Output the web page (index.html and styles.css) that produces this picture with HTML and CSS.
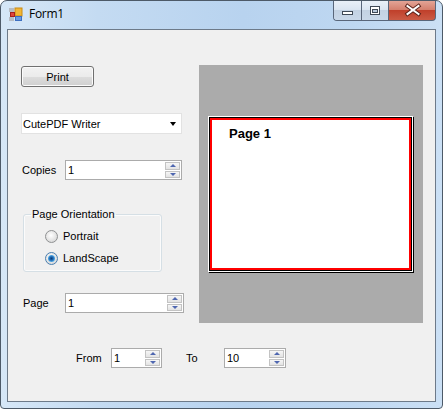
FILE: index.html
```html
<!DOCTYPE html>
<html>
<head>
<meta charset="utf-8">
<title>Form1</title>
<link rel="stylesheet" href="styles.css">
</head>
<body>
<div class="window">
  <div class="titlebar">
    <svg class="app-icon" width="16" height="16" viewBox="0 0 16 16">
      <rect x="1" y="2" width="5" height="4" fill="#b7bcc3"/>
      <rect x="1" y="11" width="5" height="4" fill="#b7bcc3"/>
      <rect x="7" y="2" width="7" height="8" fill="#f2b636" stroke="#c98a10" stroke-width="1"/>
      <rect x="7.5" y="10.5" width="6" height="4" fill="#6b9be0" stroke="#3d6fc0" stroke-width="1"/>
      <rect x="2.5" y="6.5" width="4" height="4" fill="#e0443a" stroke="#a8211b" stroke-width="1"/>
    </svg>
    <span class="title">Form1</span>
    <div class="caption">
      <div class="cap-group">
        <div class="cap-btn cap-min">
          <svg width="27" height="19" viewBox="0 0 27 19"><rect x="8.5" y="10.5" width="10" height="3" fill="#fff" stroke="#3f4956"/></svg>
        </div>
        <div class="cap-btn cap-max">
          <svg width="26" height="19" viewBox="0 0 26 19"><rect x="8.5" y="5.5" width="9" height="8" fill="#fff" stroke="#3f4956"/><rect x="10.5" y="8.5" width="5" height="3" fill="#b9c9db" stroke="#3f4956"/></svg>
        </div>
      </div>
      <div class="cap-btn cap-close">
        <svg width="46" height="19" viewBox="0 0 46 19"><path d="M18.5 5 L29.5 13 M29.5 5 L18.5 13" stroke="#5a2219" stroke-width="4" stroke-linecap="square" fill="none"/><path d="M18.5 5 L29.5 13 M29.5 5 L18.5 13" stroke="#fff" stroke-width="2" stroke-linecap="square" fill="none"/></svg>
      </div>
    </div>
  </div>
  <div class="client">
    <div class="top-row">
      <div class="left-col">
        <button class="btn">Print</button>
        <div class="combo"><span>CutePDF Writer</span><span class="combo-arrow"></span></div>
        <div class="field-row copies">
          <span class="lbl">Copies</span>
          <div class="numeric num-copies">
            <span class="num-value">1</span>
            <div class="spin"><div class="spin-btn"><span class="arrow-up"></span></div><div class="spin-btn"><span class="arrow-down"></span></div></div>
          </div>
        </div>
        <fieldset class="group">
          <legend>Page Orientation</legend>
          <div class="radio-row"><span class="radio"></span>Portrait</div>
          <div class="radio-row"><span class="radio checked"></span>LandScape</div>
        </fieldset>
        <div class="field-row page-row">
          <span class="lbl">Page</span>
          <div class="numeric num-page">
            <span class="num-value">1</span>
            <div class="spin"><div class="spin-btn"><span class="arrow-up"></span></div><div class="spin-btn"><span class="arrow-down"></span></div></div>
          </div>
        </div>
      </div>
      <div class="preview">
        <div class="page">
          <div class="page-frame">
            <div class="page-sheet">Page 1</div>
          </div>
        </div>
      </div>
    </div>
    <div class="bottom-row">
      <span class="lbl lbl-from">From</span>
      <div class="numeric num-from">
        <span class="num-value">1</span>
        <div class="spin"><div class="spin-btn"><span class="arrow-up"></span></div><div class="spin-btn"><span class="arrow-down"></span></div></div>
      </div>
      <span class="lbl lbl-to">To</span>
      <div class="numeric num-to">
        <span class="num-value">10</span>
        <div class="spin"><div class="spin-btn"><span class="arrow-up"></span></div><div class="spin-btn"><span class="arrow-down"></span></div></div>
      </div>
    </div>
  </div>
</div>
</body>
</html>
```

FILE: styles.css
```css
* { box-sizing: border-box; }
html, body { margin: 0; padding: 0; }
body {
  width: 443px;
  height: 409px;
  overflow: hidden;
  background: #fff;
  font-family: "Liberation Sans", Arial, sans-serif;
  font-size: 11px;
  color: #000;
}

.window {
  width: 443px;
  height: 409px;
  border: 1px solid #4d5a68;
  border-radius: 7px 7px 4px 4px;
  padding: 0 6px 6px;
  background: linear-gradient(to right, #d6e7f7 0%, #c4dbf2 22%, #b8d3ef 55%, #bed7f1 80%, #cbe0f5 100%);
  display: flex;
  flex-direction: column;
}

/* title bar */
.titlebar {
  height: 28px;
  display: flex;
  align-items: flex-start;
  padding-left: 1px;
}
.app-icon { margin-top: 5px; flex: none; }
.title {
  margin-left: 5px;
  margin-top: 5px;
  font-family: "Open Sans", "Noto Sans", sans-serif;
  font-size: 12px;
  line-height: 16px;
  letter-spacing: -0.3px;
  color: #000;
}
.caption {
  margin-left: auto;
  display: flex;
}
.cap-group {
  display: flex;
  border-left: 1px solid #59667a;
  border-bottom: 1px solid #59667a;
  border-radius: 0 0 0 4px;
  overflow: hidden;
}
.cap-btn { height: 20px; display: flex; }
.cap-group .cap-btn { height: 19px; }
.cap-min {
  width: 28px;
  border-right: 1px solid #59667a;
  background: linear-gradient(#e9f0f8 0%, #dbe5f1 45%, #c3d2e3 50%, #c9d8e9 100%);
}
.cap-max {
  width: 27px;
  border-right: 1px solid #59667a;
  background: linear-gradient(#e9f0f8 0%, #dbe5f1 45%, #c3d2e3 50%, #c9d8e9 100%);
}
.cap-close {
  width: 47px;
  border-right: 1px solid #59667a;
  border-bottom: 1px solid #59667a;
  border-radius: 0 0 4px 0;
  background: linear-gradient(#e3a496 0%, #d5806e 45%, #c0402b 50%, #cb5b45 100%);
}

/* client area */
.client {
  flex: 1;
  border: 1px solid #6d7a89;
  background: #f0f0f0;
  padding: 35px 0 0 13px;
}
.top-row {
  display: flex;
  align-items: flex-start;
}
.left-col {
  width: 178px;
  padding-top: 1px;
  display: flex;
  flex-direction: column;
  align-items: flex-start;
}

.btn {
  width: 73px;
  height: 21px;
  margin: 0;
  padding: 0;
  border: 1px solid #707070;
  border-radius: 3px;
  background: linear-gradient(#f2f2f2 0%, #ebebeb 50%, #dddddd 50%, #cfcfcf 100%);
  box-shadow: inset 0 0 0 1px #fbfbfb;
  font-family: "Liberation Sans", Arial, sans-serif;
  font-size: 11px;
  color: #000;
}

.combo {
  margin-top: 26px;
  width: 161px;
  height: 21px;
  background: #fff;
  border: 1px solid #e2e2e2;
  display: flex;
  align-items: center;
  justify-content: space-between;
  padding: 0 5px 0 1px;
}
.combo-arrow {
  width: 0;
  height: 0;
  border-left: 3.5px solid transparent;
  border-right: 3.5px solid transparent;
  border-top: 4px solid #000;
}

.field-row {
  display: flex;
  align-items: center;
}
.copies { margin-top: 26px; padding-left: 1px; }
.copies .lbl { width: 43px; }
.page-row { margin-top: 21px; padding-left: 2px; }
.page-row .lbl { width: 42px; }

.numeric {
  height: 20px;
  border: 1px solid #ababab;
  background: #fff;
  display: flex;
}
.num-copies { width: 117px; }
.num-page { width: 119px; }
.num-from { width: 51px; }
.num-to { width: 62px; }
.num-value {
  flex: 1;
  padding-left: 2px;
  line-height: 18px;
}
.spin {
  width: 16px;
  display: flex;
  flex-direction: column;
  gap: 1px;
  padding: 1px 1px 1px 0;
}
.spin-btn {
  flex: 1;
  border: 1px solid #c3c3c3;
  background: linear-gradient(#f6f6f6, #e3e3e3);
  display: flex;
  align-items: center;
  justify-content: center;
}
.arrow-up {
  width: 0;
  height: 0;
  border-left: 3.5px solid transparent;
  border-right: 3.5px solid transparent;
  border-bottom: 3px solid #4f67b0;
}
.arrow-down {
  width: 0;
  height: 0;
  border-left: 3.5px solid transparent;
  border-right: 3.5px solid transparent;
  border-top: 3px solid #4f67b0;
}

/* group box */
.group {
  margin: 28px 0 0 2px;
  width: 139px;
  border: 1px solid #d5dfe5;
  border-radius: 3px;
  box-shadow: inset 0 0 0 1px #fbfbfb;
  padding: 4px 0 2px 7px;
  min-width: 0;
}
.group legend {
  padding: 0 1px;
  line-height: 13px;
  font-size: 11px;
}
.radio-row {
  height: 22px;
  display: flex;
  align-items: center;
  margin-left: 14px;
}
.radio {
  width: 13px;
  height: 13px;
  border-radius: 50%;
  border: 1px solid #8f9192;
  background: radial-gradient(circle at 45% 40%, #ffffff 0%, #e9e9e9 45%, #cdcdcd 100%);
  margin-right: 5px;
  display: flex;
  align-items: center;
  justify-content: center;
}
.radio.checked { border-color: #4a7fb0; }
.radio.checked::after {
  content: "";
  width: 7px;
  height: 7px;
  border-radius: 50%;
  background: radial-gradient(circle at 50% 50%, #0b3b74 0%, #1e67b3 35%, #56aee6 70%, #a6d8f5 100%);
}

/* preview */
.preview {
  width: 224px;
  height: 258px;
  background: #ababab;
  padding: 51px 0 0 9px;
}
.page {
  width: 205px;
  height: 156px;
  border: 1px solid #fff;
  box-shadow: 1px 1px 0 #000;
}
.page-frame {
  height: 100%;
  border: 1px solid #000;
}
.page-sheet {
  height: 100%;
  border: 2px solid #ff0000;
  background: #fff;
  padding: 6px 0 0 17px;
  font-family: "Liberation Sans", Arial, sans-serif;
  font-weight: bold;
  font-size: 13px;
  line-height: 15px;
}

/* bottom row */
.bottom-row {
  display: flex;
  align-items: center;
  margin-top: 25px;
  padding-left: 55px;
}
.lbl-from { width: 35px; }
.lbl-to { width: 38px; margin-left: 24px; }
```
